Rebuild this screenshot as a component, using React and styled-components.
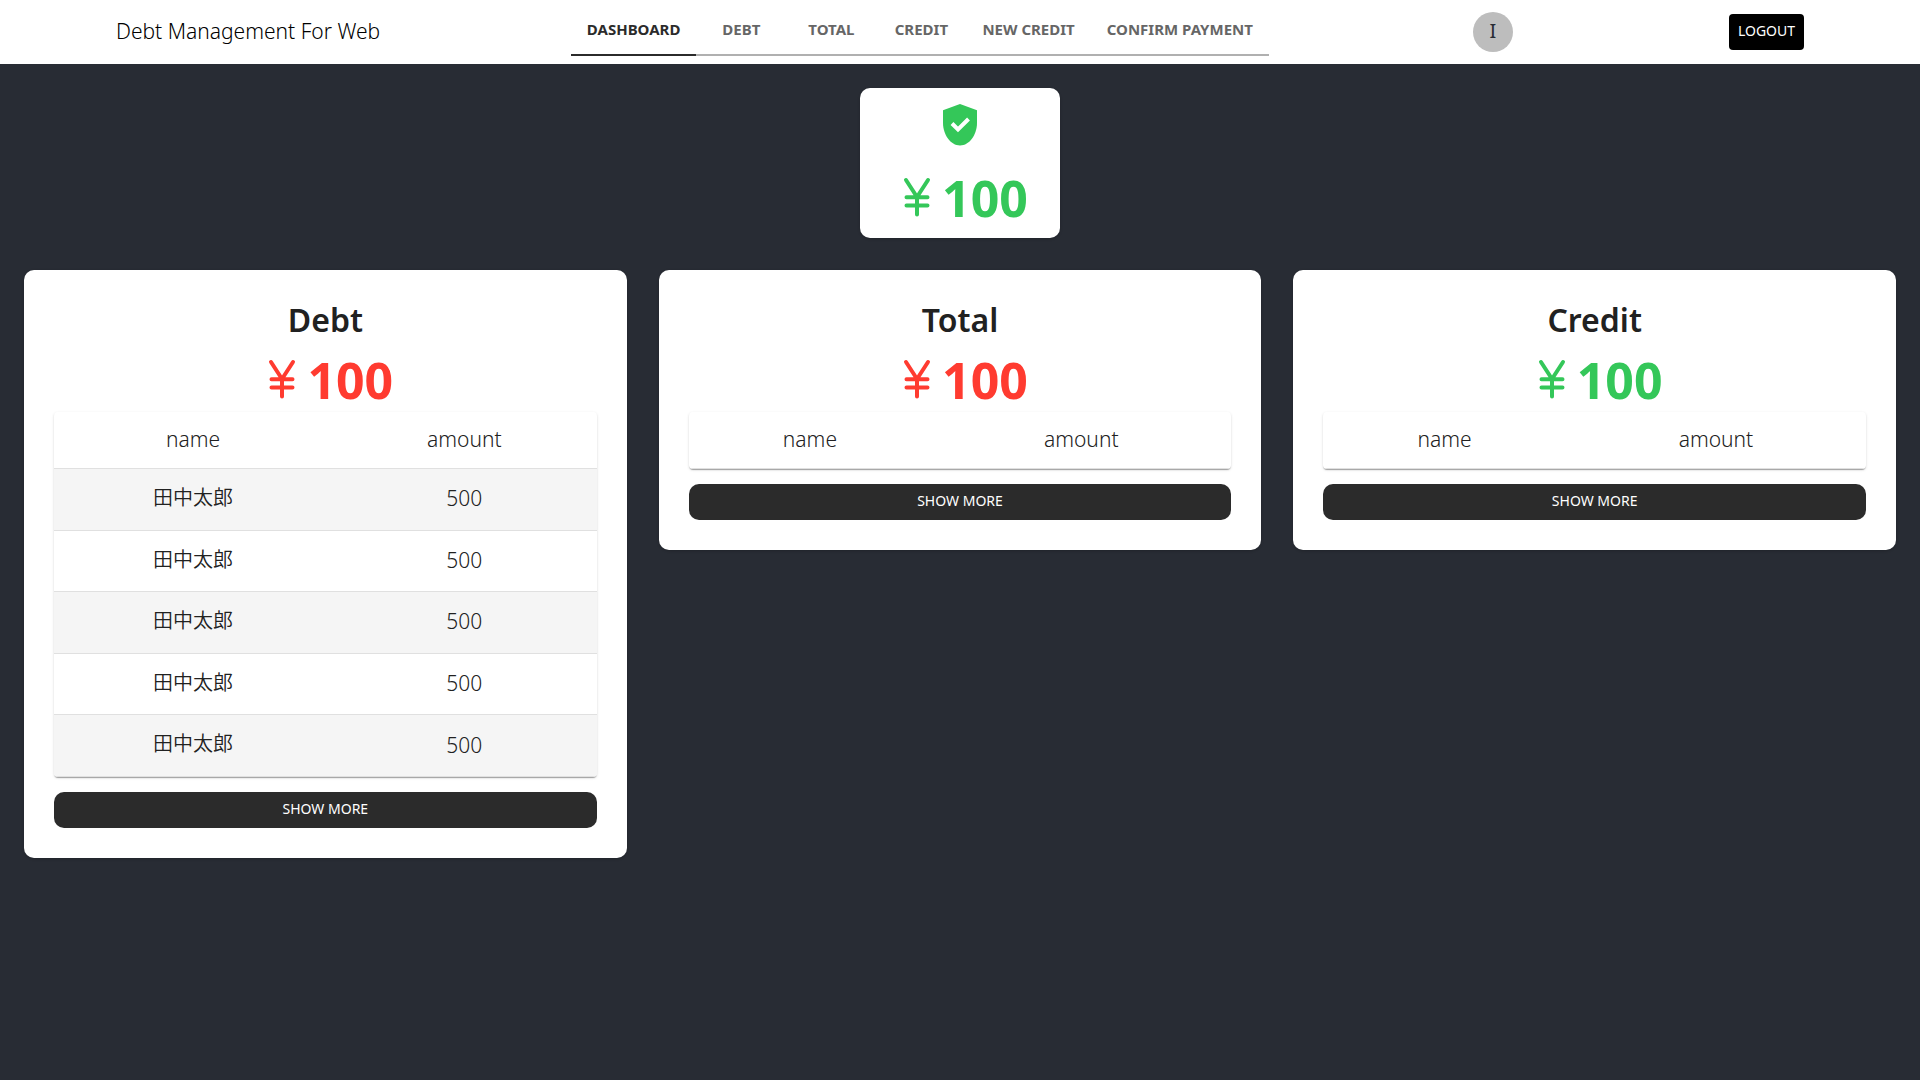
import React from "react";
import styled, { createGlobalStyle } from "styled-components";

const GlobalStyle = createGlobalStyle`
  *, *::before, *::after { box-sizing: border-box; }
  body {
    margin: 0;
    background: #282c34;
    color: #212121;
    font-family: "Noto Sans", "Noto Sans CJK JP", sans-serif;
  }
`;

const green = "#34c759";
const red = "#ff3b30";

const Header = styled.header`
  display: flex;
  align-items: center;
  height: 64px;
  padding: 0 116px;
  background: #fff;
`;

const Brand = styled.div`
  flex: 17 1 0;
  padding-bottom: 2px;
  font-size: 21px;
  font-weight: 350;
  line-height: 30px;
  color: #000;
  white-space: nowrap;
`;

const Tabs = styled.nav`
  display: flex;
`;

const Tab = styled.a`
  min-width: 90px;
  height: 48px;
  padding: 9px 16px;
  border-bottom: 2px solid ${(p) => (p.$active ? "#2b2b2b" : "#b0b0b0")};
  color: ${(p) => (p.$active ? "#2b2b2b" : "#666")};
  font-size: 15px;
  font-weight: 700;
  line-height: 24px;
  text-align: center;
  text-decoration: none;
  white-space: nowrap;
`;

const Account = styled.div`
  flex: 20 1 0;
  display: flex;
  align-items: center;
  justify-content: flex-end;
  gap: 216px;
`;

const Avatar = styled.div`
  display: flex;
  align-items: center;
  justify-content: center;
  width: 40px;
  height: 40px;
  padding-bottom: 2px;
  border-radius: 50%;
  background: #bdbdbd;
  color: #282c34;
  font-size: 20px;
  line-height: 20px;
`;

const LogoutButton = styled.button`
  min-width: 75px;
  height: 36px;
  padding: 0 8px 2px;
  border: 0;
  border-radius: 4px;
  background: #000;
  color: #fff;
  font-family: inherit;
  font-size: 14px;
  line-height: 24px;
  cursor: pointer;
`;

const Main = styled.main`
  display: flex;
  flex-direction: column;
  gap: 32px;
  padding: 24px;
`;

const Card = styled.section`
  border-radius: 10px;
  background: #fff;
  box-shadow: 0 1px 3px rgba(0, 0, 0, 0.2);
`;

const SummaryCard = styled(Card)`
  display: flex;
  flex-direction: column;
  align-items: center;
  gap: 14px;
  align-self: center;
  width: 200px;
  height: 150px;
  padding-top: 12px;
`;

const Columns = styled.div`
  display: grid;
  grid-template-columns: repeat(3, minmax(0, 1fr));
  align-items: start;
  gap: 32px;
`;

const Panel = styled(Card)`
  display: flex;
  flex-direction: column;
  padding: 30px;
`;

const PanelTitle = styled.h2`
  margin: 0 0 6px;
  font-size: 32px;
  font-weight: 600;
  line-height: 40px;
  text-align: center;
`;

const AmountLine = styled.div`
  display: flex;
  align-items: center;
  justify-content: center;
  height: 66px;
  color: ${(p) => p.$color};
  font-size: 50px;
  font-weight: 700;
  line-height: 64px;

  svg { display: block; }
  span { padding-top: 2px; }
`;

const TableCard = styled.div`
  overflow: hidden;
  border-radius: 4px;
  box-shadow: 0 2px 1px -1px rgba(0, 0, 0, 0.2), 0 1px 1px rgba(0, 0, 0, 0.14),
    0 1px 3px rgba(0, 0, 0, 0.12);
`;

const Table = styled.table`
  width: 100%;
  border-collapse: collapse;
`;

const HeadCell = styled.th`
  padding: 15px 16px 17px;
  border-bottom: 1px solid #e0e0e0;
  font-size: 21px;
  font-weight: 350;
  line-height: 24px;
  text-align: center;
`;

const Cell = styled.td`
  padding: 15px 16px 17px;
  border-bottom: 1px solid #e0e0e0;
  font-size: ${(p) => (p.$numeric ? "21px" : "20px")};
  font-weight: 350;
  line-height: ${(p) => (p.$numeric ? "28px" : "1.43")};
  text-align: center;
`;

const Row = styled.tr`
  &:nth-of-type(odd) { background: #f5f5f5; }
`;

const ShowMore = styled.button`
  height: 36px;
  margin-top: 15px;
  padding: 0 0 2px;
  border: 0;
  border-radius: 10px;
  background: #2b2b2b;
  color: #fff;
  font-family: inherit;
  font-size: 14px;
  line-height: 24px;
  cursor: pointer;
`;

const YenIcon = () => (
  <svg width="50" height="50" viewBox="0 0 50 50" fill="none" stroke="currentColor" strokeWidth="4" strokeLinecap="round" strokeLinejoin="round" aria-hidden="true">
    <path d="M14 8L25 25L36 8M25 25V42.5M14.5 25.2H35.5M14.5 33.5H35.5" />
  </svg>
);

const ShieldIcon = () => (
  <svg width="50" height="50" viewBox="0 0 50 50" aria-hidden="true">
    <path fill={green} d="M25 4L42 10.3V23C42 34.5 34.5 45.5 25 45.5S8 34.5 8 23V10.3Z" />
    <path fill="none" stroke="#fff" strokeWidth="4" d="M17 23.5L23 29.5L33.5 19" />
  </svg>
);

const Amount = ({ color, value }) => (
  <AmountLine $color={color}>
    <YenIcon />
    <span>{value}</span>
  </AmountLine>
);

const tabs = ["DASHBOARD", "DEBT", "TOTAL", "CREDIT", "NEW CREDIT", "CONFIRM PAYMENT"];

const debtRows = Array.from({ length: 5 }, (_, id) => ({ id, name: "田中太郎", amount: 500 }));

const panels = [
  { title: "Debt", color: red, rows: debtRows },
  { title: "Total", color: red, rows: [] },
  { title: "Credit", color: green, rows: [] },
];

export default function App() {
  return (
    <>
      <GlobalStyle />
      <Header>
        <Brand>Debt Management For Web</Brand>
        <Tabs>
          {tabs.map((label, i) => (
            <Tab key={label} href="#" $active={i === 0}>{label}</Tab>
          ))}
        </Tabs>
        <Account>
          <Avatar>I</Avatar>
          <LogoutButton type="button">LOGOUT</LogoutButton>
        </Account>
      </Header>
      <Main>
        <SummaryCard>
          <ShieldIcon />
          <Amount color={green} value={100} />
        </SummaryCard>
        <Columns>
          {panels.map(({ title, color, rows }) => (
            <Panel key={title}>
              <PanelTitle>{title}</PanelTitle>
              <Amount color={color} value={100} />
              <TableCard>
                <Table>
                  <thead>
                    <tr>
                      <HeadCell scope="col">name</HeadCell>
                      <HeadCell scope="col">amount</HeadCell>
                    </tr>
                  </thead>
                  <tbody>
                    {rows.map((row) => (
                      <Row key={row.id}>
                        <Cell>{row.name}</Cell>
                        <Cell $numeric>{row.amount}</Cell>
                      </Row>
                    ))}
                  </tbody>
                </Table>
              </TableCard>
              <ShowMore type="button">SHOW MORE</ShowMore>
            </Panel>
          ))}
        </Columns>
      </Main>
    </>
  );
}
